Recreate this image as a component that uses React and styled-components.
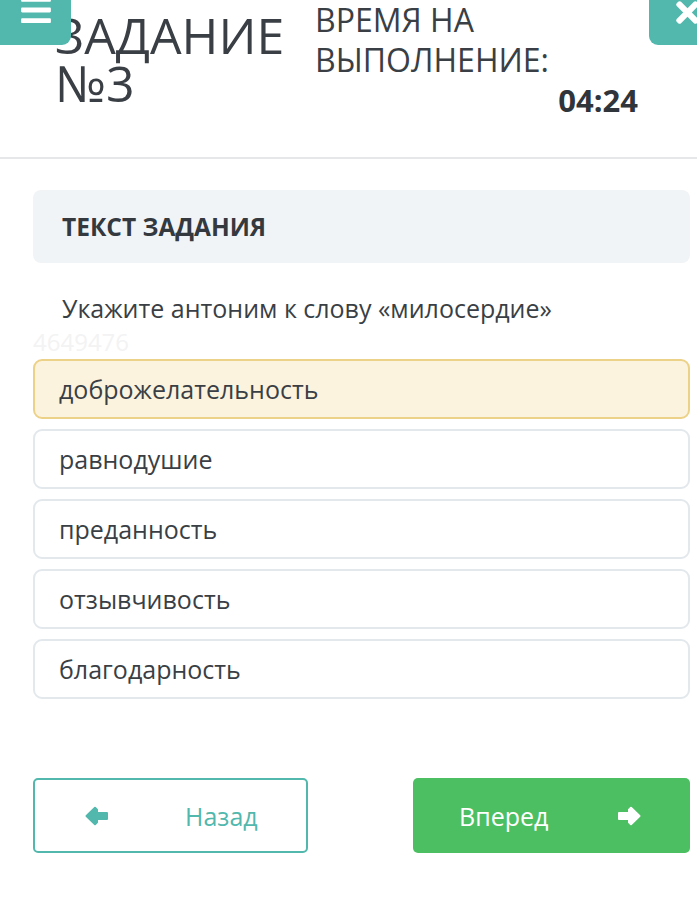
import React from "react";
import styled, { createGlobalStyle } from "styled-components";
import { FaBars, FaTimes } from "react-icons/fa";

const GlobalStyle = createGlobalStyle`
  body {
    margin: 0;
    background: #ffffff;
    font-family: "Open Sans", "Noto Sans", sans-serif;
    color: #3a3f45;
    overflow: hidden;
  }
  * { box-sizing: border-box; }
`;

const options = [
  "доброжелательность",
  "равнодушие",
  "преданность",
  "отзывчивость",
  "благодарность",
];

// chunky arrow, head + short shaft
const Arrow = ({ dir = "left" }) => (
  <svg
    width="24"
    height="20"
    viewBox="0 0 24 20"
    style={{ transform: dir === "right" ? "scaleX(-1)" : "none" }}
  >
    <path
      d="M1.5 10 L10 1.8 L12 3.8 V7 H22 V13 H12 V16.2 L10 18.2 Z"
      fill="currentColor"
      stroke="currentColor"
      strokeWidth="2"
      strokeLinejoin="round"
    />
  </svg>
);

export default function App() {
  return (
    <>
      <GlobalStyle />
      <Page>
        <MenuButton>
          <FaBars size={34} />
        </MenuButton>
        <CloseButton>
          <FaTimes size={33} />
        </CloseButton>
        <Header>
          <Title>
            ЗАДАНИЕ
            <br />
            №3
          </Title>
          <Timer>
            <TimerLabel>
              ВРЕМЯ НА
              <br />
              ВЫПОЛНЕНИЕ:
            </TimerLabel>
            <TimerValue>04:24</TimerValue>
          </Timer>
        </Header>
        <Body>
          <TaskCard>ТЕКСТ ЗАДАНИЯ</TaskCard>
          <Question>Укажите антоним к слову «милосердие»</Question>
          <Watermark>4649476</Watermark>
          <Options>
            {options.map((o, i) => (
              <Option key={o} selected={i === 0}>
                {o}
              </Option>
            ))}
          </Options>
          <Nav>
            <BackButton>
              <Arrow dir="left" />
              <span>Назад</span>
            </BackButton>
            <NextButton>
              <span>Вперед</span>
              <Arrow dir="right" />
            </NextButton>
          </Nav>
        </Body>
      </Page>
    </>
  );
}

const Page = styled.div`
  position: relative;
  width: 697px;
  height: 912px;
`;

const MenuButton = styled.div`
  position: absolute;
  top: 0;
  left: 0;
  width: 71px;
  height: 45px;
  background: #52b8ad;
  border-radius: 0 0 9px 0;
  color: #ffffff;
  display: flex;
  justify-content: center;
  align-items: flex-end;
  padding-bottom: 18px;
  z-index: 2;
`;

const CloseButton = styled.div`
  position: absolute;
  top: 0;
  left: 649px;
  width: 70px;
  height: 45px;
  background: #52b8ad;
  border-radius: 0 0 0 9px;
  color: #ffffff;
  display: flex;
  align-items: flex-end;
  padding: 0 0 16px 22px;
  z-index: 2;
`;

const Header = styled.header`
  height: 159px;
  border-bottom: 2px solid #e5e7e9;
  display: flex;
  padding: 0 59px 0 55px;
`;

const Title = styled.h1`
  margin: 0;
  padding-top: 11px;
  width: 260px;
  font-size: 50px;
  line-height: 48px;
  font-weight: 400;
  color: #3a3f45;
`;

const Timer = styled.div`
  flex: 1;
  display: flex;
  flex-direction: column;
`;

const TimerLabel = styled.div`
  font-size: 32px;
  line-height: 40px;
  color: #3a3f45;
`;

const TimerValue = styled.div`
  font-size: 31px;
  line-height: 40px;
  font-weight: 700;
  text-align: right;
  color: #2f353b;
`;

const Body = styled.main`
  padding: 31px 7px 0 33px;
`;

const TaskCard = styled.div`
  height: 73px;
  background: #f1f4f6;
  border-radius: 8px;
  padding-left: 29px;
  display: flex;
  align-items: center;
  font-size: 24.5px;
  font-weight: 700;
  color: #33393f;
`;

const Question = styled.p`
  margin: 29px 0 0;
  padding-left: 29px;
  font-size: 25px;
  line-height: 33px;
  color: #3a3f45;
`;

const Watermark = styled.div`
  font-size: 24px;
  line-height: 33px;
  color: #f3f3f3;
`;

const Options = styled.div`
  margin-top: 1px;
  display: flex;
  flex-direction: column;
  gap: 10px;
`;

const Option = styled.div`
  height: 60px;
  border: 2px solid ${(p) => (p.selected ? "#ecd189" : "#e3e8ec")};
  background: ${(p) => (p.selected ? "#fcf3de" : "#ffffff")};
  border-radius: 9px;
  padding-left: 24px;
  display: flex;
  align-items: center;
  font-size: 25px;
  color: #3a3f45;
`;

const Nav = styled.div`
  margin-top: 79px;
  display: flex;
  justify-content: space-between;
`;

const NavButton = styled.div`
  height: 75px;
  display: flex;
  align-items: center;
  font-size: 25px;
  border-radius: 5px;
`;

const BackButton = styled(NavButton)`
  width: 275px;
  border: 2px solid #52b8ad;
  color: #52b8ad;
  padding-left: 50px;
  gap: 76px;
`;

const NextButton = styled(NavButton)`
  width: 277px;
  background: #4cbf62;
  color: #ffffff;
  justify-content: space-between;
  padding: 0 49px 0 46px;
`;
